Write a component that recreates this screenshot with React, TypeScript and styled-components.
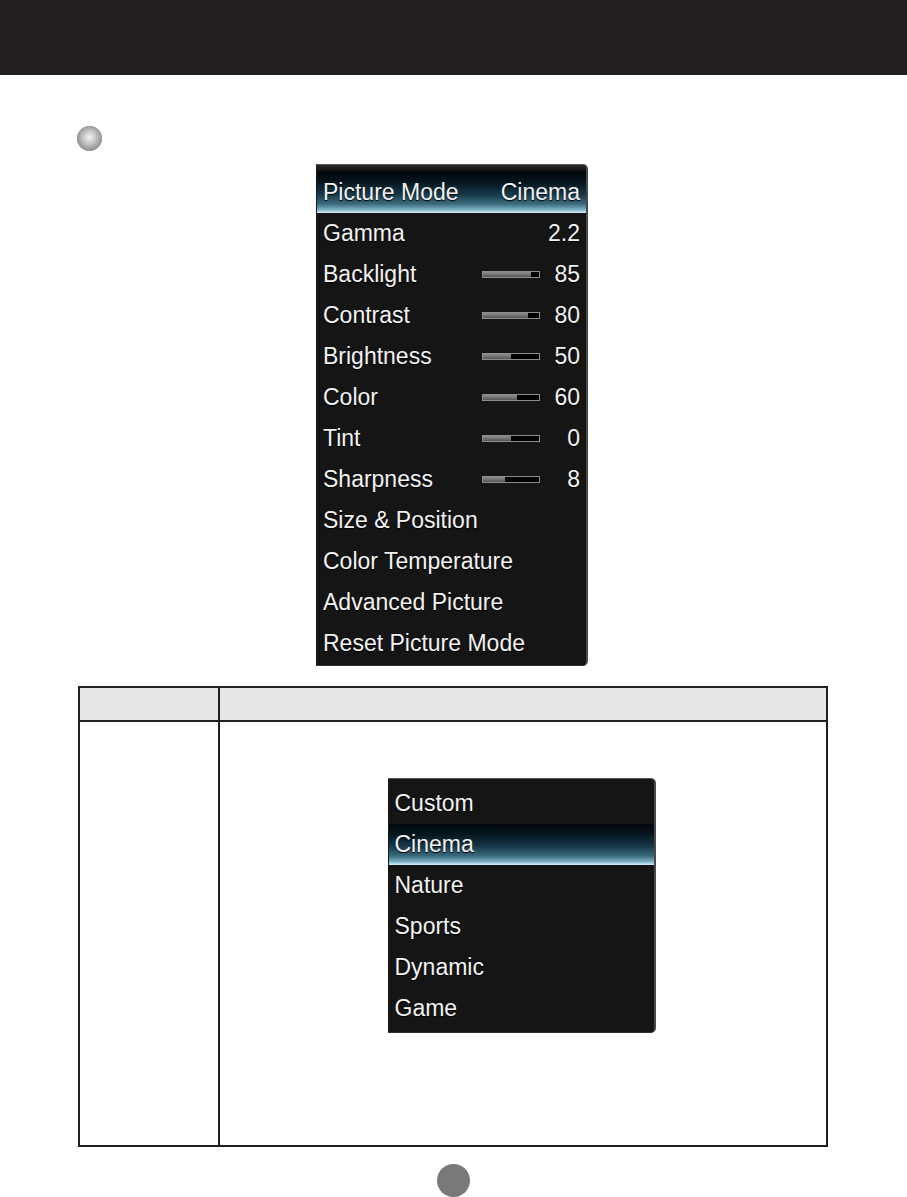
import React from "react";
import styled, { createGlobalStyle } from "styled-components";

const GlobalStyle = createGlobalStyle`
  html, body {
    margin: 0;
    padding: 0;
    background: #ffffff;
  }
  body {
    font-family: "Liberation Sans", Arial, sans-serif;
  }
`;

type Row = {
  label: string;
  value?: string;
  level?: number;
  active?: boolean;
};

const pictureRows: Row[] = [
  { label: "Picture Mode", value: "Cinema", active: true },
  { label: "Gamma", value: "2.2" },
  { label: "Backlight", value: "85", level: 85 },
  { label: "Contrast", value: "80", level: 80 },
  { label: "Brightness", value: "50", level: 50 },
  { label: "Color", value: "60", level: 60 },
  { label: "Tint", value: "0", level: 50 },
  { label: "Sharpness", value: "8", level: 40 },
  { label: "Size & Position" },
  { label: "Color Temperature" },
  { label: "Advanced Picture" },
  { label: "Reset Picture Mode" },
];

const modeRows: Row[] = [
  { label: "Custom" },
  { label: "Cinema", active: true },
  { label: "Nature" },
  { label: "Sports" },
  { label: "Dynamic" },
  { label: "Game" },
];

const App = () => {
  return (
    <Page>
      <GlobalStyle />
      <TopBar />

      <Bullet />

      <Center>
        <OsdPanel $width={272} $topBar>
          {pictureRows.map((row) => (
            <OsdRow key={row.label} $active={row.active}>
              <Label>{row.label}</Label>
              {row.level !== undefined && (
                <Slider>
                  <SliderFill style={{ width: `${row.level}%` }} />
                </Slider>
              )}
              {row.value && <Value>{row.value}</Value>}
            </OsdRow>
          ))}
        </OsdPanel>
      </Center>

      <Table>
        <tbody>
          <tr>
            <HeadCell $first />
            <HeadCell />
          </tr>
          <tr>
            <BodyCell />
            <BodyCell>
              <Center>
                <OsdPanel $width={268}>
                  {modeRows.map((row) => (
                    <OsdRow key={row.label} $active={row.active}>
                      <Label>{row.label}</Label>
                    </OsdRow>
                  ))}
                </OsdPanel>
              </Center>
            </BodyCell>
          </tr>
        </tbody>
      </Table>

      <PageDot />
    </Page>
  );
};

const Page = styled.div`
  width: 907px;
  height: 1197px;
  overflow: hidden;
  display: flex;
  flex-direction: column;
`;

const TopBar = styled.div`
  height: 75px;
  background: #231f20;
`;

const Bullet = styled.div`
  width: 25px;
  height: 25px;
  margin: 51px 0 0 77px;
  border-radius: 50%;
  background: radial-gradient(
    circle at 50% 45%,
    #f4f4f4 0%,
    #c4c4c4 35%,
    #8a8a8a 75%,
    #6a6a6a 100%
  );
  box-shadow: 0 0 0 1px #9a9a9a inset;
`;

const Center = styled.div`
  display: flex;
  justify-content: center;
  padding-right: 3px;
`;

const OsdPanel = styled.div<{ $width: number; $topBar?: boolean }>`
  width: ${(p) => p.$width}px;
  margin-top: ${(p) => (p.$topBar ? "13px" : "56px")};
  padding: ${(p) => (p.$topBar ? "7px 0 1px" : "4px 0 3px")};
  box-sizing: border-box;
  background: #151515;
  border-top: 1px solid #5a5a5a;
  border-right: 2px solid #4a4a4a;
  border-bottom: 1px solid #333;
  border-left: 1px solid #1a1a1a;
  border-radius: 0 5px 5px 0;
  background-image: ${(p) =>
    p.$topBar
      ? "linear-gradient(to bottom, #2a2a2a 0px, #0b0b0b 7px, #151515 8px)"
      : "none"};
`;

const OsdRow = styled.div<{ $active?: boolean }>`
  height: 41px;
  display: flex;
  align-items: center;
  padding: 0 6px;
  color: #f2f2f2;
  font-family: "Liberation Sans", Arial, sans-serif;
  font-size: 23px;
  text-shadow: 0 1px 1px #000;
  background: ${(p) =>
    p.$active
      ? "linear-gradient(to bottom, #00070b 0%, #06161e 25%, #17394a 55%, #3b6a7d 78%, #7fb0c4 92%, #d6f0fb 100%)"
      : "transparent"};
`;

const Label = styled.span`
  flex: 1;
  white-space: nowrap;
`;

const Slider = styled.div`
  width: 56px;
  height: 5px;
  margin-right: 10px;
  border: 1px solid #8c8c8c;
  background: #000;
  display: flex;
`;

const SliderFill = styled.div`
  height: 100%;
  background: linear-gradient(to bottom, #8e8e8e, #555555);
`;

const Value = styled.span`
  min-width: 30px;
  text-align: right;
`;

const Table = styled.table`
  width: 750px;
  margin: 20px 0 0 78px;
  border-collapse: collapse;
  table-layout: fixed;
`;

const HeadCell = styled.td<{ $first?: boolean }>`
  width: ${(p) => (p.$first ? "138px" : "auto")};
  height: 32px;
  padding: 0;
  background: #e6e6e6;
  border: 2px solid #231f20;
`;

const BodyCell = styled.td`
  height: 423px;
  padding: 0;
  vertical-align: top;
  border: 2px solid #231f20;
`;

const PageDot = styled.div`
  width: 33px;
  height: 33px;
  margin: 17px auto 0;
  border-radius: 50%;
  background: #7a7879;
`;

export default App;
